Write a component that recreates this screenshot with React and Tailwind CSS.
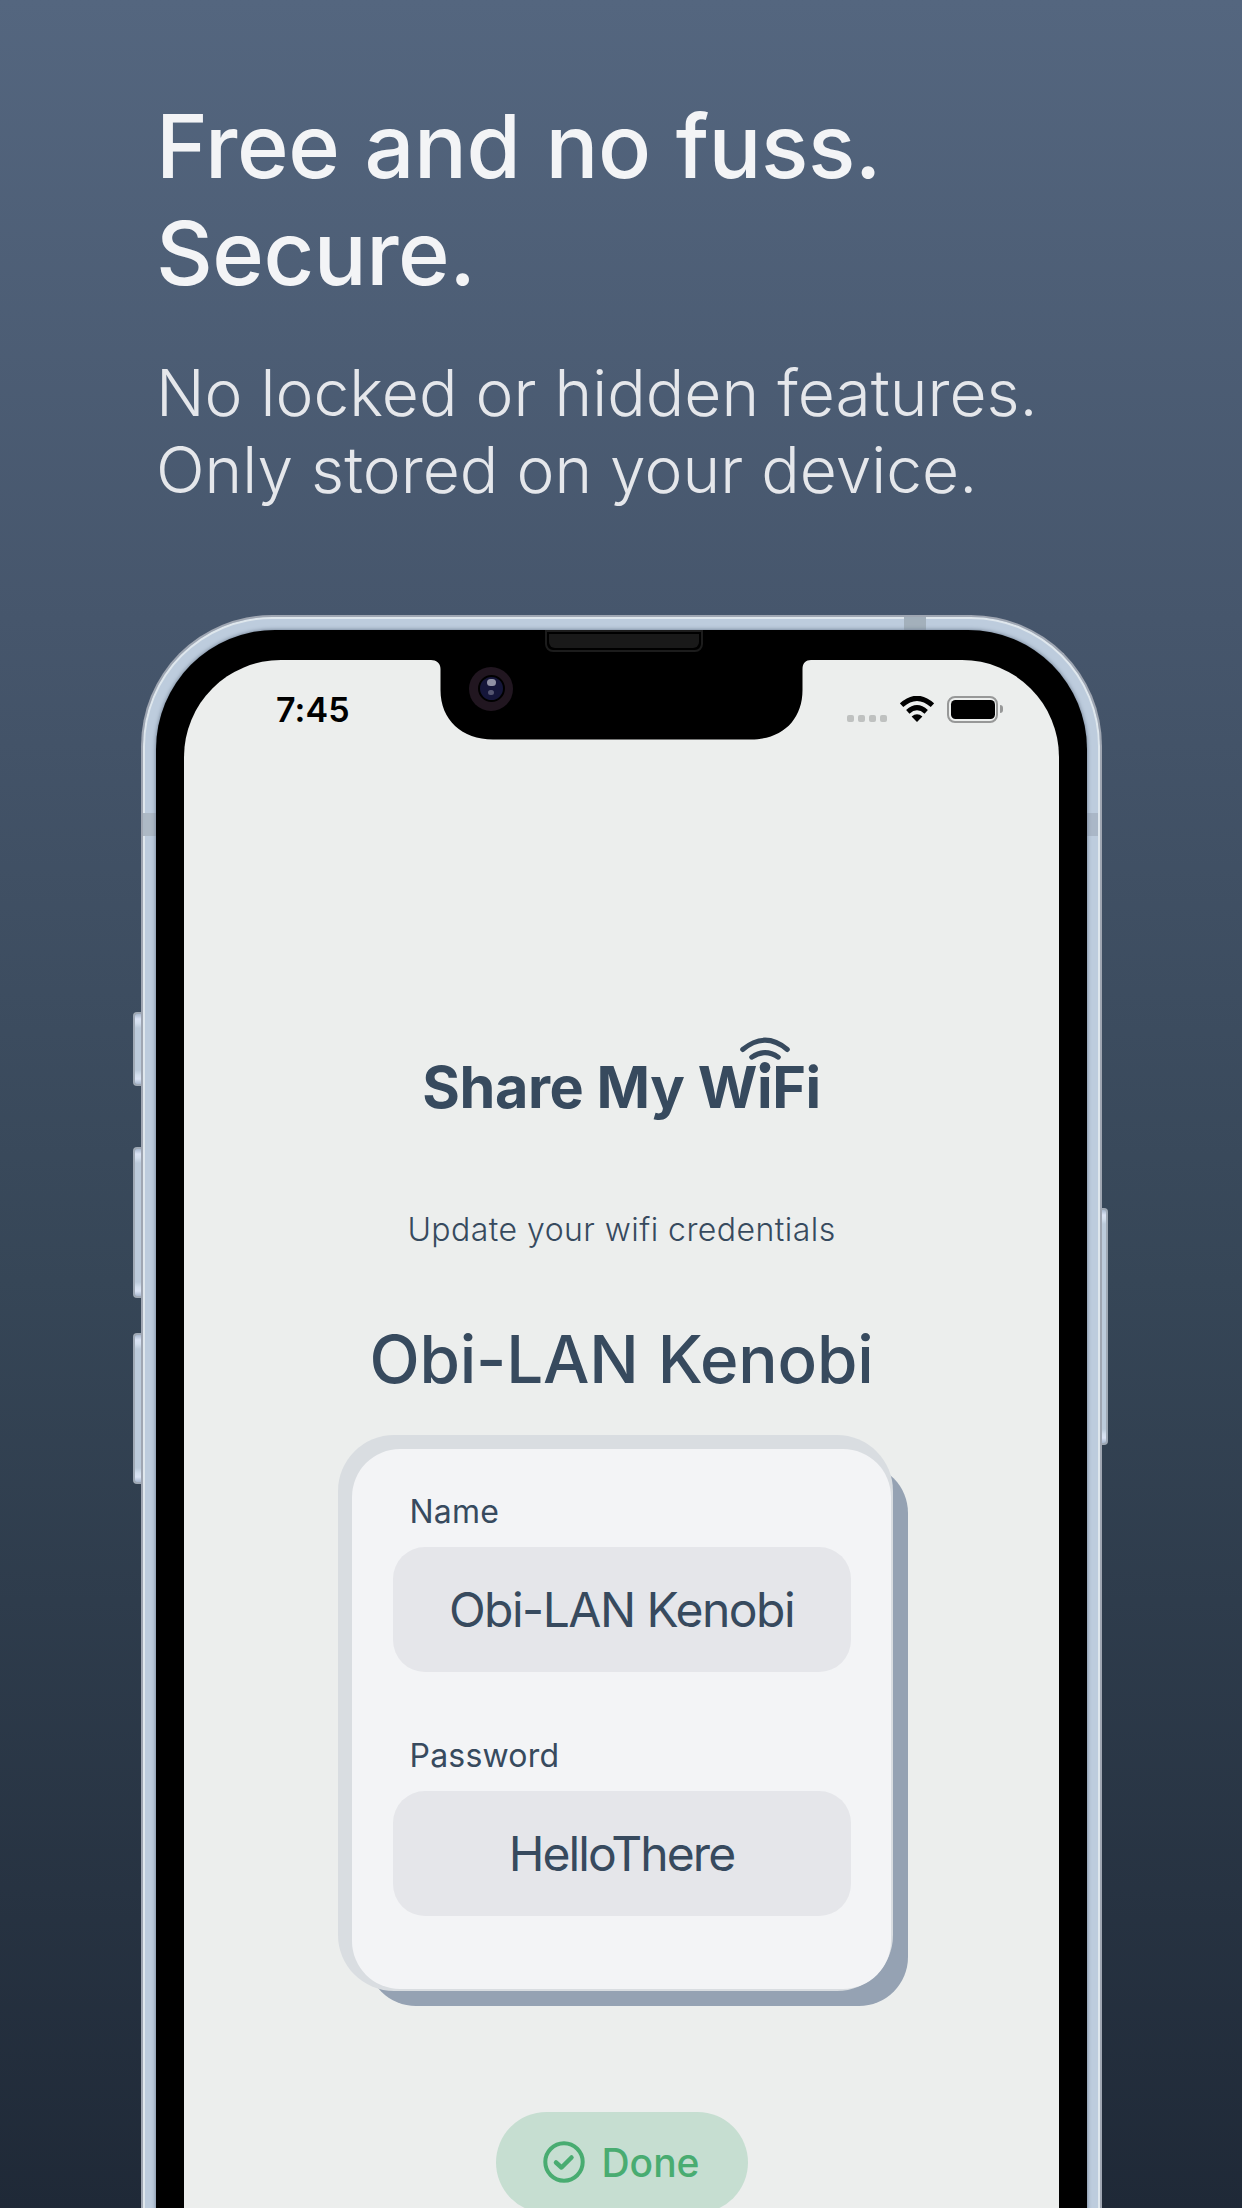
const ink = "text-[#374a5e]";

function Antenna({ className }) {
  return <div className={`absolute ${className}`} />;
}

function SideButton({ className }) {
  return (
    <div
      className={`absolute border-[#9fa9b5] bg-[linear-gradient(to_bottom,#a9b9cf_0,#dbe4f5_5px,#d3dfee_9px,#bccbdb_14px,#bccbdb_calc(100%-14px),#d3dfee_calc(100%-9px),#dbe4f5_calc(100%-5px),#a9b9cf_100%)] ${className}`}
    />
  );
}

function StatusBar() {
  return (
    <div className="flex h-[100px] items-start justify-between pt-[26px] pl-[92px] pr-[56px]">
      <div className="mt-[3px] text-[34px] leading-[42px] font-semibold tracking-[0.1px] text-black">7:45</div>
      <div className="mt-[10px] flex items-start">
        <div className="mt-[19px] flex gap-[4px]">
          {[0, 1, 2, 3].map((i) => (
            <div key={i} className="h-[7px] w-[7px] rounded-[2px] bg-[#bfc1c0]" />
          ))}
        </div>
        <svg className="ml-[13px]" width="34" height="27" viewBox="0 0 34 27">
          <path d="M1.600 9.200 Q17 -4.600 32.400 9.200" fill="none" stroke="#000" strokeWidth="5" />
          <path d="M7.800 15.800 Q17 7.600 26.200 15.800" fill="none" stroke="#000" strokeWidth="5" />
          <path d="M17 26 L11.600 20.600 Q17 15.800 22.400 20.600 Z" fill="#000" />
        </svg>
        <div className="ml-[13px] flex h-[27px] w-[51px] items-center justify-center rounded-[8px] border-2 border-[#979898]">
          <div className="h-[19px] w-[44px] rounded-[4.5px] bg-black" />
        </div>
        <div className="mt-[9px] ml-[2px] h-[8px] w-[3px] rounded-r-full bg-[#979898]" />
      </div>
    </div>
  );
}

function Notch() {
  return (
    <>
      <svg className="absolute left-[247px] top-0" width="380" height="81" viewBox="0 0 380 81">
        <path d="M0 0 C5 0 9.5 3 9.5 9 V30 C9.5 60 31 79.5 62 79.5 H320 C351 79.5 371.500 60 371.500 30 V9 C371.500 3 375 0 380 0 Z" fill="#000" />
      </svg>
      <div className="absolute left-[285px] top-[7px] flex h-[44px] w-[44px] items-center justify-center rounded-full bg-[#211620]">
        <div className="h-[27px] w-[27px] rounded-full border-2 border-black bg-[#15163a]">
          <div className="mx-auto mt-[2px] h-[7px] w-[9px] rounded-full bg-[#9091a4]" />
          <div className="mx-auto mt-[4px] h-[5px] w-[6px] rounded-full bg-[#555671]" />
        </div>
      </div>
    </>
  );
}

function Field({ label, value, tracking }) {
  return (
    <div>
      <div className={`pl-[17px] text-[32px] leading-[39px] tracking-[0.2px] ${ink}`}>{label}</div>
      <div className={`mt-[16px] flex h-[125px] items-center justify-center rounded-[32px] bg-[#e5e6ea] pt-[2px] text-[48px] leading-[58px] ${tracking} ${ink}`}>
        {value}
      </div>
    </div>
  );
}

export default function App() {
  return (
    <div className="relative h-[2208px] w-[1242px] overflow-hidden bg-[linear-gradient(to_bottom,#54667f,#46566c_28%,#364657_58%,#1f2937)] pt-[93px] font-['Inter',sans-serif]">
      <header className="pl-[156px] whitespace-nowrap">
        <h1 className="text-[88px] leading-[106.5px] font-medium tracking-[-0.5px] [word-spacing:2.2px] text-[#f3f4f6]">
          Free and no fuss.
          <br />
          Secure.
        </h1>
        <p className="mt-[48px] text-[64px] leading-[77.400px] font-light tracking-[0.030px] text-[#e5e7eb]">
          No locked or hidden features.
          <br />
          Only stored on your device.
        </p>
      </header>

      <div className="relative mt-[106px] ml-[141px] h-[1700px] w-[961px] rounded-t-[131px] border-2 border-b-0 border-[#9fa6b2] bg-[#bccbdb] shadow-[inset_0_0_0_2px_#dfe7ed,inset_0_0_0_12px_#bdccdd] p-[13px] pb-0">
        <SideButton className="left-[-10px] top-[395px] h-[74px] w-[8px] rounded-l-[4px] border-2 border-r-0" />
        <SideButton className="left-[-10px] top-[530px] h-[151px] w-[8px] rounded-l-[4px] border-2 border-r-0" />
        <SideButton className="left-[-10px] top-[716px] h-[151px] w-[8px] rounded-l-[4px] border-2 border-r-0" />
        <SideButton className="right-[-8px] top-[591px] h-[237px] w-[6px] rounded-r-[4px] border-2 border-l-0" />
        <Antenna className="left-0 top-[196px] h-[23px] w-[13px] bg-[#adb9c5]" />
        <Antenna className="right-[2px] top-[196px] h-[23px] w-[11px] bg-[#aab7c7]" />
        <Antenna className="left-[761px] top-0 h-[13px] w-[22px] bg-[#a3b0bb]" />

        <div className="relative h-full w-[931px] rounded-t-[119px] bg-black px-[28px] pt-[30px] shadow-[0_0_4px_0_#66758a]">
          <div className="absolute left-[389px] top-0 h-[22px] w-[158px] rounded-b-[8px] border-2 border-[#1c1c1c] bg-black p-[2px]">
            <div className="h-[14px] w-full rounded-b-[6px] bg-[#191919]" />
          </div>

          <div className="relative h-full w-[875px] rounded-t-[97px] bg-[#eceeed]">
            <Notch />
            <StatusBar />
            <main className="flex flex-col items-center pt-[293px]">
              <div className="relative">
                <h2 className={`text-[57.5px] leading-[69px] font-bold tracking-[-0.400px] ${ink}`}>Share My WiFi</h2>
                <svg className="absolute left-[317px] top-[-17px]" width="52" height="38" viewBox="0 0 52 38">
                  <path d="M3.700 13.500 Q26 -5.100 48.300 13.500" fill="none" stroke="#374a5e" strokeWidth="5" strokeLinecap="round" />
                  <path d="M12.700 21.200 Q26 12 39.300 21.200" fill="none" stroke="#374a5e" strokeWidth="5" strokeLinecap="round" />
                  <circle cx="26" cy="31.200" r="5.300" fill="#374a5e" />
                </svg>
              </div>
              <p className={`mt-[88px] text-[32px] leading-[39px] font-light tracking-[0.450px] ${ink}`}>Update your wifi credentials</p>
              <h3 className={`mt-[72px] text-[65.5px] leading-[78px] font-medium tracking-[-0.200px] [word-spacing:2px] ${ink}`}>Obi-LAN Kenobi</h3>
              <section className="mt-[50px] h-[540px] w-[539px] rounded-[48px] bg-[#f3f4f6] px-[40.5px] pt-[43px] shadow-[-6px_-6px_0_8px_#d9dde1,16px_16px_0_1px_#95a2b3]">
                <Field label="Name" value="Obi-LAN Kenobi" tracking="tracking-[-1.500px]" />
                <div className="h-[64px]" />
                <Field label="Password" value="HelloThere" tracking="tracking-[-1.900px]" />
              </section>
              <button className="mt-[123px] flex h-[101px] w-[252px] items-center justify-center gap-[16px] rounded-full bg-[#c6ded1] text-[#49ac71]">
                <svg width="42" height="42" viewBox="0 0 42 42" fill="none" stroke="currentColor">
                  <circle cx="21" cy="21" r="18.700" strokeWidth="4" />
                  <path d="M13 21.500 L18.500 26.500 L28.500 16.500" strokeWidth="4.500" strokeLinecap="round" strokeLinejoin="round" />
                </svg>
                <span className="pt-[1px] text-[39px] leading-[48px] font-medium">Done</span>
              </button>
            </main>
          </div>
        </div>
      </div>
    </div>
  );
}
